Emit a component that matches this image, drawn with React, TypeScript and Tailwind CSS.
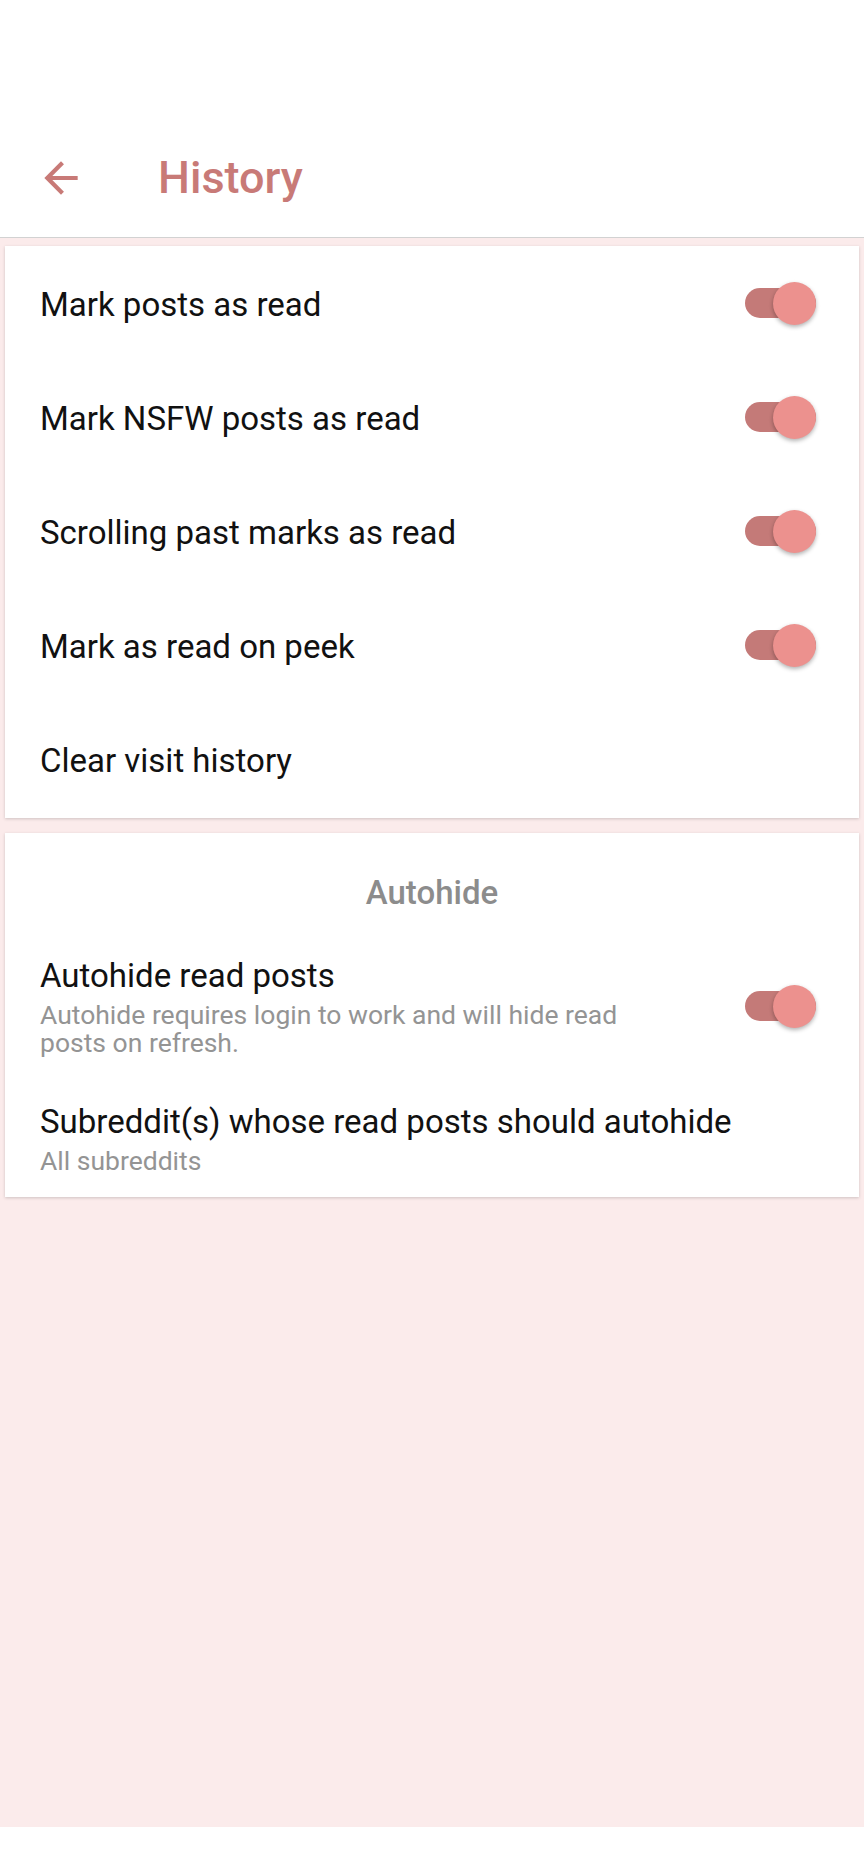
import { FunctionComponent } from "react";

const ACCENT = "text-[#c87a77]";

const Toggle: FunctionComponent = () => (
  <div className="relative h-[43px] w-[71px]">
    <div className="absolute left-0 top-[6px] h-[30px] w-[71px] rounded-full bg-[#c47a78]" />
    <div className="absolute right-0 top-0 h-[43px] w-[43px] rounded-full bg-[#ec918e] shadow-[0_2px_4px_rgba(0,0,0,0.3)]" />
  </div>
);

const SwitchRow: FunctionComponent<{ title: string }> = ({ title }) => (
  <div className="flex h-[114px] items-center">
    <div className="flex-1 pl-[35px] pt-[3px] text-[33px] leading-[40px] text-[#111]">{title}</div>
    <div className="flex w-[225px] justify-end pr-[43px]">
      <Toggle />
    </div>
  </div>
);

const App: FunctionComponent = () => {
  return (
    <div
      className="flex h-[1872px] w-full flex-col bg-white"
      style={{ fontFamily: "Roboto, 'Noto Sans', sans-serif" }}
    >
      {/* toolbar */}
      <div className="flex h-[238px] flex-col justify-end border-b border-[#d2d2d2] bg-white">
        <div className="flex h-[118px] items-center pl-[36px]">
          <svg viewBox="0 0 24 24" className="h-[50px] w-[50px] fill-[#c87a77]">
            <path d="M20 11H7.83l5.59-5.59L12 4l-8 8 8 8 1.41-1.41L7.83 13H20v-2z" />
          </svg>
          <h1 className={`ml-[72px] text-[45px] font-medium leading-[50px] ${ACCENT}`}>History</h1>
        </div>
      </div>

      {/* content */}
      <div className="flex flex-1 flex-col bg-[#fbebeb] px-[5px] pt-[8px]">
        <div className="bg-white pb-[2px] shadow-[0_1px_3px_rgba(0,0,0,0.18)]">
          <SwitchRow title="Mark posts as read" />
          <SwitchRow title="Mark NSFW posts as read" />
          <SwitchRow title="Scrolling past marks as read" />
          <SwitchRow title="Mark as read on peek" />
          <div className="flex h-[114px] items-center pl-[35px] pt-[3px] text-[33px] leading-[40px] text-[#111]">
            Clear visit history
          </div>
        </div>

        <div className="mt-[15px] bg-white pb-[22px] shadow-[0_1px_3px_rgba(0,0,0,0.18)]">
          <div className="pt-[41px] text-center text-[33px] font-medium leading-[38px] text-[#8c8c8c]">
            Autohide
          </div>
          <div className="flex items-center pb-[21px] pt-[44px]">
            <div className="flex-1 pl-[35px]">
              <div className="text-[33px] leading-[40px] text-[#111]">Autohide read posts</div>
              <div className="mt-[5px] text-[26.5px] leading-[28px] text-[#949494]">
                Autohide requires login to work and will hide read posts on refresh.
              </div>
            </div>
            <div className="flex w-[225px] justify-end pr-[43px]">
              <Toggle />
            </div>
          </div>
          <div className="pl-[35px] pt-[24px]">
            <div className="text-[33px] leading-[40px] text-[#111]">
              Subreddit(s) whose read posts should autohide
            </div>
            <div className="mt-[5px] text-[26.5px] leading-[28px] text-[#949494]">All subreddits</div>
          </div>
        </div>
      </div>

      {/* nav bar */}
      <div className="h-[45px] bg-white" />
    </div>
  );
};

export default App;
